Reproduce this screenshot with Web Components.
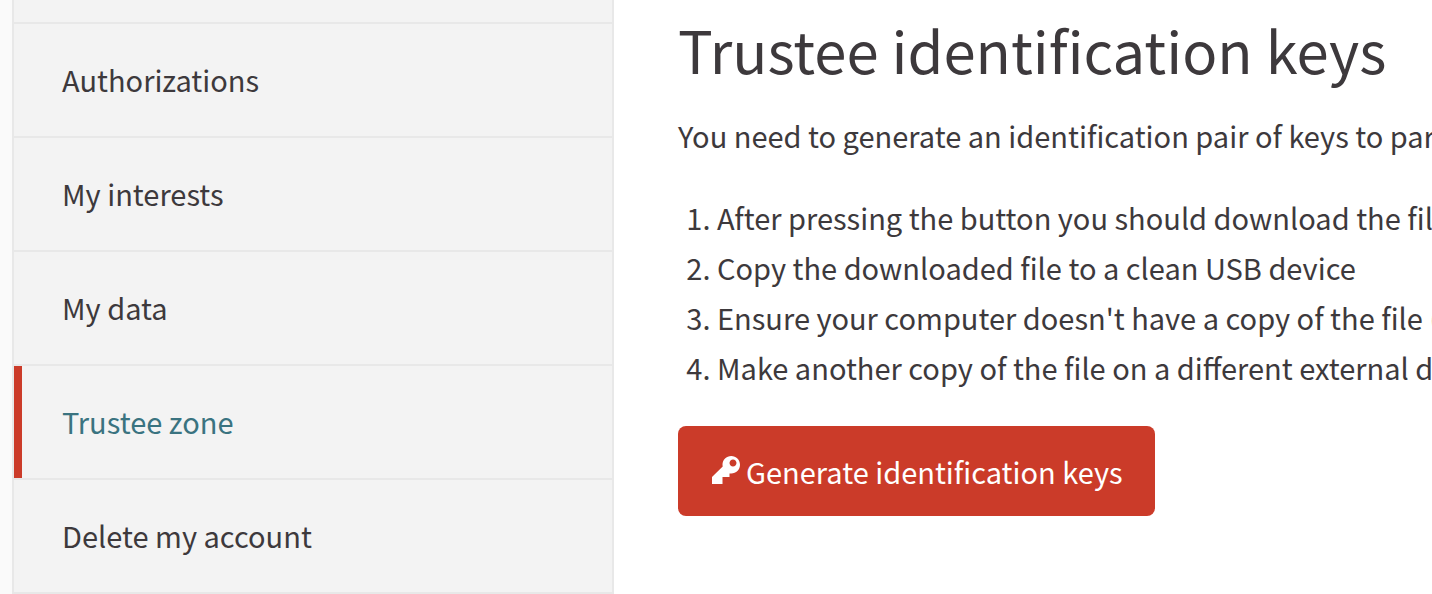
<!DOCTYPE html>
<html lang="en">
<head>
<meta charset="utf-8">
<meta name="viewport" content="width=device-width, initial-scale=1">
<title>Trustee zone</title>
<style>
  body {
    margin: 0;
    --text: #3d393c;
    --accent: #cb3b29;
    --link: #3a7380;
    --line: #e8e8e8;
    --panel: #f3f3f3;
    color: var(--text);
    background: #fff;
    font-family: "Noto Sans CJK SC", "Source Sans Pro", "Noto Sans", sans-serif;
    font-size: 29px;
    line-height: 50px;
  }
</style>
</head>
<body>
<account-page>
  <account-menu slot="menu"></account-menu>
  <trustee-panel>
    <span slot="title">Trustee identification keys</span>
    <span slot="intro">You need to generate an identification pair of keys to part</span>
    <action-button slot="action">Generate identification keys</action-button>
  </trustee-panel>
</account-page>

<script>
  function define(name, html) {
    const template = document.createElement('template');
    template.innerHTML = html;
    customElements.define(name, class extends HTMLElement {
      constructor() {
        super();
        this.attachShadow({ mode: 'open' }).append(template.content.cloneNode(true));
      }
    });
  }

  define('account-page', `
    <style>
      :host { display: grid; grid-template-columns: 12px minmax(280px, 602px) minmax(0, 1fr); }
      .gutter { background: #fafafa; }
      main { min-width: 0; overflow: hidden; padding: 9px 0 0 64px; }
    </style>
    <div class="gutter"></div>
    <slot name="menu"></slot>
    <main><slot></slot></main>`);

  define('menu-link', `
    <style>
      :host { display: block; }
      a {
        display: block; padding: 30px 40px 32px; border-left: 8px solid transparent;
        color: var(--text); text-decoration: none;
      }
      :host([active]) a { border-left-color: var(--accent); color: var(--link); }
    </style>
    <a href="#"><slot></slot></a>`);

  define('account-menu', `
    <style>
      :host { display: block; background: var(--panel); border: 2px solid var(--line); border-top: 0; }
      ul { list-style: none; margin: 0; padding: 22px 0 0; }
      li { border-top: 2px solid var(--line); }
    </style>
    <nav aria-label="Account">
      <ul>
        <li><menu-link>Authorizations</menu-link></li>
        <li><menu-link>My interests</menu-link></li>
        <li><menu-link>My data</menu-link></li>
        <li><menu-link active>Trustee zone</menu-link></li>
        <li><menu-link>Delete my account</menu-link></li>
      </ul>
    </nav>`);

  define('action-button', `
    <style>
      :host { display: inline-block; }
      button {
        display: flex; align-items: center; gap: 6px; padding: 20px 32px 20px 34px;
        border: 0; border-radius: 8px; background: var(--accent); color: #fff;
        font: inherit; cursor: pointer; white-space: nowrap;
      }
      svg { width: 28px; height: 28px; margin-bottom: 2px; fill: currentColor; }
    </style>
    <button type="button">
      <svg viewBox="0 0 8 8" aria-hidden="true"><path d="M5.5 0c-1.38 0-2.5 1.12-2.5 2.5 0 .16.03.32.06.47l-3.06 3.03v2h3v-2h2v-1l.03-.03c.15.03.31.03.47.03 1.38 0 2.5-1.12 2.5-2.5s-1.12-2.5-2.5-2.5zm.5 1c.55 0 1 .45 1 1s-.45 1-1 1-1-.45-1-1 .45-1 1-1z"/></svg>
      <span><slot></slot></span>
    </button>`);

  define('trustee-panel', `
    <style>
      :host { display: block; white-space: nowrap; }
      h1 { margin: 0 0 21px; font-size: 58px; font-weight: 400; line-height: 80px; }
      p { margin: 0 0 32px; }
      ol { margin: 0 0 34px; padding-left: 39px; }
    </style>
    <h1><slot name="title"></slot></h1>
    <p><slot name="intro"></slot></p>
    <ol>
      <li>After pressing the button you should download the file</li>
      <li>Copy the downloaded file to a clean USB device</li>
      <li>Ensure your computer doesn't have a copy of the file (</li>
      <li>Make another copy of the file on a different external de</li>
    </ol>
    <slot name="action"></slot>`);
</script>
</body>
</html>
